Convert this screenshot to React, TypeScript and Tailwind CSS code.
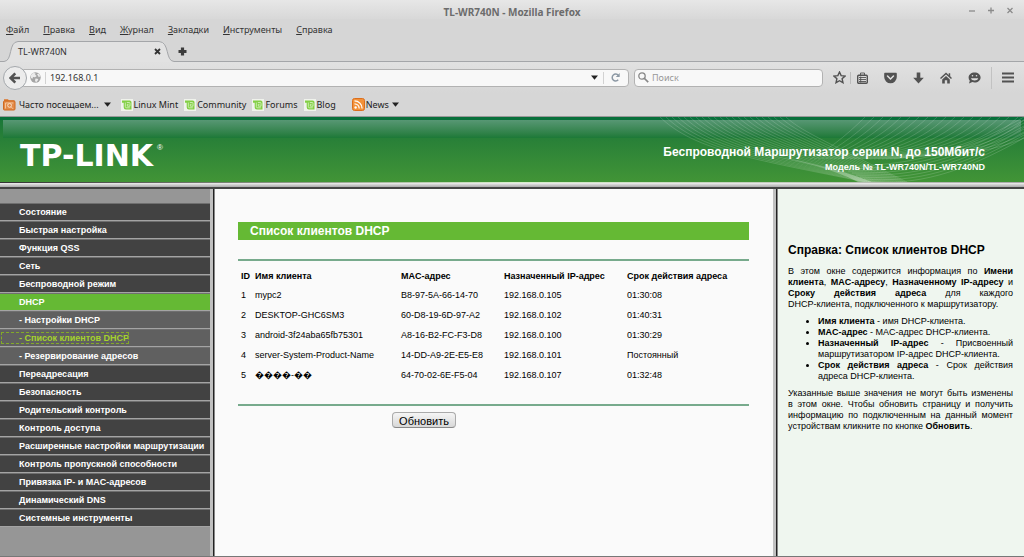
import type { ReactNode } from "react";

const ink = "#525252";

const menus = [
  ["Ф", "айл"],
  ["П", "равка"],
  ["В", "ид"],
  ["Ж", "урнал"],
  ["З", "акладки"],
  ["И", "нструменты"],
  ["С", "правка"],
];

type NavItem = { label: string; kind?: "open" | "sub" | "current" };

const nav: NavItem[] = [
  { label: "Состояние" },
  { label: "Быстрая настройка" },
  { label: "Функция QSS" },
  { label: "Сеть" },
  { label: "Беспроводной режим" },
  { label: "DHCP", kind: "open" },
  { label: "- Настройки DHCP", kind: "sub" },
  { label: "- Список клиентов DHCP", kind: "current" },
  { label: "- Резервирование адресов", kind: "sub" },
  { label: "Переадресация" },
  { label: "Безопасность" },
  { label: "Родительский контроль" },
  { label: "Контроль доступа" },
  { label: "Расширенные настройки маршрутизации" },
  { label: "Контроль пропускной способности" },
  { label: "Привязка IP- и MAC-адресов" },
  { label: "Динамический DNS" },
  { label: "Системные инструменты" },
];

const clients = [
  ["1", "mypc2", "B8-97-5A-66-14-70", "192.168.0.105", "01:30:08"],
  ["2", "DESKTOP-GHC6SM3", "60-D8-19-6D-97-A2", "192.168.0.102", "01:40:31"],
  ["3", "android-3f24aba65fb75301", "A8-16-B2-FC-F3-D8", "192.168.0.100", "01:30:29"],
  ["4", "server-System-Product-Name", "14-DD-A9-2E-E5-E8", "192.168.0.101", "Постоянный"],
  ["5", "\uFFFD\uFFFD\uFFFD\uFFFD-\uFFFD\uFFFD", "64-70-02-6E-F5-04", "192.168.0.107", "01:32:48"],
];

function Caret() {
  return (
    <svg width="7" height="5" viewBox="0 0 7 5" aria-hidden="true">
      <path d="M0 .5h7L3.5 4.8z" fill="#222" />
    </svg>
  );
}

function IconButton({ label, children }: { label: string; children: ReactNode }) {
  return (
    <button type="button" aria-label={label} className="flex h-5 w-4 shrink-0 items-center justify-center">
      {children}
    </button>
  );
}

function MintIcon() {
  return (
    <svg width="12" height="12" viewBox="0 0 12 12" aria-hidden="true">
      <rect width="12" height="12" fill="#f0f3ec" />
      <path d="M1 1.500h7.700a1.800 1.800 0 0 1 1.800 1.800V10.500H5a2.300 2.300 0 0 1-2.300-2.300V3.800H1z" fill="#83cf45" />
      <path d="M4.300 3.500v4a1.300 1.300 0 0 0 1.300 1.300h3.200M5.800 3.500h2.400a.8.8 0 0 1 .8.800v2.900H6.300V5.300h1.300" fill="none" stroke="#e6f9d8" strokeWidth=".7" />
    </svg>
  );
}

function FolderIcon() {
  return (
    <svg width="13" height="13" viewBox="0 0 13 13" aria-hidden="true">
      <path d="M1 3.500V1.300h4l.8 1h5.700v2z" fill="#dd762b" />
      <rect x=".5" y="3" width="11.500" height="9" rx="1" fill="#e38a48" stroke="#cf6a20" />
      <circle cx="6.600" cy="7.400" r="1.900" fill="none" stroke="#fbe8d4" strokeWidth=".9" />
      <path d="m8 8.800 2 2M2.500 10.500V5h7.800" stroke="#f7d3b0" strokeWidth=".8" fill="none" />
    </svg>
  );
}

function FeedIcon() {
  return (
    <svg width="13" height="13" viewBox="0 0 13 13" aria-hidden="true">
      <rect x=".5" y=".5" width="12" height="12" rx="2" fill="#f29139" stroke="#dc6e1d" />
      <circle cx="3.600" cy="9.500" r="1.200" fill="#fff" />
      <path d="M2.500 5.800a4.700 4.700 0 0 1 4.700 4.700M2.500 2.900a7.600 7.600 0 0 1 7.600 7.600" fill="none" stroke="#fff" strokeWidth="1.300" />
    </svg>
  );
}

function TitleBar() {
  return (
    <div className="grid h-[19px] grid-cols-[1fr_auto_1fr] items-center bg-linear-to-b from-[#e7e7e7] to-[#d8d8d8] pt-1">
      <span />
      <h1 className="text-[10px] leading-4 font-bold text-[#6c6c6c]">TL-WR740N - Mozilla Firefox</h1>
      <div className="flex justify-end gap-3 pr-[11px]">
        {["M0 4h6", "M0 3.500h6M3 .5v6", "M.5 1l5 5M5.500 1l-5 5"].map((d, i) => (
          <button key={d} type="button" aria-label={["Свернуть", "Развернуть", "Закрыть"][i]} className="flex h-4 w-[7px] items-start justify-center pt-[3px]">
            <svg width="6" height="7" viewBox="0 0 6 7"><path d={d} stroke="#8b8b8b" strokeWidth="1.300" /></svg>
          </button>
        ))}
      </div>
    </div>
  );
}

function TabStrip() {
  return (
    <div className="relative flex h-[21px] items-center">
      <svg className="absolute inset-0 h-[21px] w-full" aria-hidden="true">
        <path d="M0 20.500H4C13 20 8 1 18 .5H159C170 1 165 20 174 20.500H3000V22H0z" fill="#e2e2e2" stroke="#a4a6a9" />
      </svg>
      <div className="relative flex w-[165px] items-center justify-between pl-[18px] pr-1">
        <span>TL-WR740N</span>
        <button type="button" aria-label="Закрыть вкладку">
          <svg width="7" height="7" viewBox="0 0 7 7"><path d="m1 1 5 5M6 1 1 6" stroke="#333" strokeWidth="1.800" /></svg>
        </button>
      </div>
      <button type="button" aria-label="Новая вкладка" className="relative ml-[13px]">
        <svg width="9" height="9" viewBox="0 0 9 9"><path d="M4.500 .5v8M.5 4.500h8" stroke="#3c3c3c" strokeWidth="3.200" /></svg>
      </button>
    </div>
  );
}

function Toolbar() {
  return (
    <div className="flex h-[31px] items-center bg-linear-to-b from-[#e1e1e1] to-[#d6d6d6] pl-[3px] pr-2">
      <button type="button" aria-label="Назад" className="z-10 flex size-6 shrink-0 items-center justify-center rounded-full border border-[#a4a8ac] bg-[#ececec]">
        <svg width="12" height="12" viewBox="0 0 12 12"><path d="M11 6H2M6.300 1.300 1.600 6l4.700 4.700" fill="none" stroke={ink} strokeWidth="2.500" /></svg>
      </button>
      <div className="-ml-1 flex h-[18px] flex-1 items-center rounded-r-sm border border-[#b2b2b2] bg-[#f8f8f8] pl-[6px] pr-2">
        <svg width="11" height="11" viewBox="0 0 11 11" aria-hidden="true">
          <circle cx="5.500" cy="5.500" r="5.200" fill="#a5a5a5" />
          <path d="m1 3 2-2 2.500.3-.3 1.500L6.700 4 5 5.300 3 5l-.5 1.700L1 6zM7 2l2-.2 1.200 2.400-1.400 1zM5.500 6.500l2 .3.800 1L6 10.500l-1-2z" fill="#ececec" />
        </svg>
        <span className="ml-1 h-3 w-px bg-[#d2d2d2]" />
        <input aria-label="Адрес" defaultValue="192.168.0.1" className="ml-1 min-w-0 flex-1 bg-transparent outline-none" />
        <button type="button" aria-label="Показать историю" className="flex items-center"><Caret /></button>
        <span className="ml-[5px] h-3 w-px bg-[#d2d2d2]" />
        <button type="button" aria-label="Обновить страницу" className="ml-[7px]">
          <svg width="9" height="9" viewBox="0 0 9 9"><path d="M7.200 6.700A3.400 3.400 0 1 1 7.300 2.400" fill="none" stroke="#8c98a4" strokeWidth="1.500" /><path d="M8.700 0v4H4.800z" fill="#8c98a4" /></svg>
        </button>
      </div>
      <label className="ml-[5px] flex h-[18px] w-[189px] items-center gap-[3px] rounded-sm border border-[#b2b2b2] bg-[#f8f8f8] pl-[3px]">
        <svg width="11" height="11" viewBox="0 0 11 11" aria-hidden="true"><circle cx="4" cy="4" r="3.200" fill="none" stroke="#888" strokeWidth="1.300" /><path d="m6.500 6.500 3.700 3.700" stroke="#888" strokeWidth="1.700" /></svg>
        <input aria-label="Поиск" placeholder="Поиск" className="min-w-0 flex-1 bg-transparent outline-none placeholder:text-[#999]" />
      </label>
      <div className="ml-2 flex items-center">
        <IconButton label="Добавить в закладки">
          <svg width="13" height="13" viewBox="0 0 12 12"><path d="m6 1 1.500 3.300 3.600.4-2.700 2.400.8 3.700L6 9l-3.200 1.800.8-3.700L.9 4.700l3.600-.4z" fill="none" stroke={ink} strokeWidth="1.300" /></svg>
        </IconButton>
        <span className="ml-[3px] h-3 w-px bg-[#bbb]" />
        <span className="ml-[3px] flex gap-3 pr-px">
          <IconButton label="Закладки">
            <svg width="11" height="12" viewBox="0 0 11 12"><rect x=".7" y="3.200" width="9.600" height="8" rx="1" fill="none" stroke={ink} strokeWidth="1.400" /><path d="M3.500 3V1h4v2M2 5.500h7M2 7.500h7M2 9.500h7M3.700 4.500v6" fill="none" stroke={ink} strokeWidth=".9" /></svg>
          </IconButton>
          <IconButton label="Pocket">
            <svg width="13" height="12" viewBox="0 0 13 12"><path d="M1.200.7h10.600c.6 0 1 .4 1 1V5A6.300 6.300 0 0 1 .2 5V1.700c0-.6.400-1 1-1z" fill={ink} /><path d="m3.500 4 3 3 3-3" fill="none" stroke="#e2e2e2" strokeWidth="1.500" strokeLinecap="round" /></svg>
          </IconButton>
          <IconButton label="Загрузки">
            <svg width="11" height="12" viewBox="0 0 11 12"><path d="M3.700.5h3.600v5.300h3.500L5.500 11.500.2 5.800h3.500z" fill={ink} /></svg>
          </IconButton>
          <IconButton label="Домой">
            <svg width="12" height="12" viewBox="0 0 12 12"><path d="m.5 6.500 5.500-5 5.500 5" fill="none" stroke={ink} strokeWidth="1.500" /><path d="m2.200 7.500 3.800-3.500 3.800 3.500v4H7.200V8.300H4.800v3.200H2.200zM8.700 1.200h1.500v3.500L8.700 3.300z" fill={ink} /></svg>
          </IconButton>
          <IconButton label="Hello">
            <svg width="13" height="12" viewBox="0 0 13 12"><path d="M6.600.5C10 .5 12.600 2.600 12.600 5.500s-2.600 5-6 5a7 7 0 0 1-2.300-.4L1 11.500l.8-2.700A4.600 4.600 0 0 1 .6 5.500c0-2.900 2.600-5 6-5z" fill={ink} /><path d="M3 6.200h7.200c-.6 3-6.600 3-7.200 0z" fill="#ddd" /><circle cx="4.500" cy="3.800" r=".8" fill="#ddd" /><circle cx="8.500" cy="3.800" r=".8" fill="#ddd" /></svg>
          </IconButton>
        </span>
        <span className="mx-2 h-[22px] w-px bg-[#c2c2c2]" />
        <IconButton label="Меню">
          <svg width="12" height="11" viewBox="0 0 12 11"><path d="M0 1.500h12M0 5.500h12M0 9.500h12" stroke={ink} strokeWidth="2" /></svg>
        </IconButton>
      </div>
    </div>
  );
}

function Bookmarks() {
  return (
    <nav aria-label="Панель закладок" className="flex h-[23px] items-center pl-[3px] text-[#222]">
      <button type="button" className="flex items-center gap-[3px]"><FolderIcon /><span className="mr-0.5 whitespace-nowrap">Часто посещаем...</span><Caret /></button>
      <span className="ml-[10px] flex gap-[6px]">
        {["Linux Mint", "Community", "Forums", "Blog"].map((name) => (
          <a key={name} href="#" className="flex items-center gap-px whitespace-nowrap"><MintIcon />{name}</a>
        ))}
      </span>
      <button type="button" className="ml-4 flex items-center gap-px"><FeedIcon /><span className="mr-0.5">News</span><Caret /></button>
    </nav>
  );
}

function Waves() {
  const lines = Array.from({ length: 22 }, (_, i) => i);
  return (
    <svg className="absolute top-0 right-0 h-[65px] w-[364px]" viewBox="0 0 364 65" aria-hidden="true">
      <defs>
        <linearGradient id="swoosh" x1="0" x2="1">
          <stop offset="0" stopColor="#fff" stopOpacity="0" />
          <stop offset="1" stopColor="#fff" stopOpacity=".38" />
        </linearGradient>
      </defs>
      <path d="M85 35C125 40 165 47 212 65h-14C170 50 130 42 85 35z" fill="url(#swoosh)" />
      <g fill="none" stroke="#fff" strokeWidth=".8" strokeOpacity=".2">
        {lines.map((i) => (
          <path key={i} d={`M${i * 6} 0C${35 + i * 5} ${34 - i} ${95 + i * 3} ${42 - i} ${205 + i * 2} 65`} />
        ))}
        {lines.map((i) => (
          <path key={i} d={`M${205 + i * 9} 0C${185 + i * 8} ${20 + i} ${165 + i * 6} 35 ${150 + i * 4} 42`} />
        ))}
        {[0, 1, 2, 3, 4, 5, 6, 7].map((i) => (
          <path key={i} d={`M${208 - i * 4} ${64 - i * 2}C255 ${69 - i * 3} 300 ${57 - i * 3} 364 ${21 - i * 3}`} />
        ))}
      </g>
    </svg>
  );
}

function Banner() {
  return (
    <header className="relative bg-linear-to-b from-[#187638] to-[#429536]">
      <div className="h-[3px] bg-[#08703b]" />
      <div className="mx-[3px] h-[18px] bg-linear-to-b from-[#579774] to-[#1c7937]" />
      <Waves />
      <div className="relative flex h-11 justify-between pr-[39px] pl-5 text-white">
        <div className="flex items-start pt-1">
          <span className="font-['DejaVu_Sans',sans-serif] text-[30px] leading-7 font-bold">TP-LINK</span>
          <span className="pl-1 text-[8px] leading-3">®</span>
        </div>
        <div className="pt-[5px] text-right font-bold">
          <p className="text-[12px] leading-[18px]">Беспроводной Маршрутизатор серии N, до 150Мбит/с</p>
          <p className="text-[9px] leading-3">Модель № TL-WR740N/TL-WR740ND</p>
        </div>
      </div>
      <div className="h-px bg-linear-to-r from-[#333] via-[#d8efcb] to-[#aaa]" />
    </header>
  );
}

function Sidebar() {
  return (
    <nav aria-label="Разделы" className="w-[210px] shrink-0 bg-[#969696] pt-[14px] text-[9px] font-bold text-white">
      <ul>
        {nav.map(({ label, kind }) => (
          <li
            key={label}
            className={`flex h-[18px] items-center border-y border-t-[#6f6f6f] border-b-[#a4a4a4] ${
              kind === "open" ? "bg-[#65b934]" : kind ? "bg-[#606060]" : "bg-[#424242]"
            }`}
          >
            <a
              href="#"
              aria-current={kind === "current" ? "page" : undefined}
              className={
                kind === "current"
                  ? "ml-px pl-[18px] leading-3 whitespace-nowrap text-[#a5d22d] outline outline-dashed outline-[#83aa28] -outline-offset-1"
                  : "pl-[19px] leading-4 whitespace-nowrap"
              }
            >
              {label}
            </a>
          </li>
        ))}
      </ul>
    </nav>
  );
}

function FrameEdge() {
  return <div className="w-[5px] shrink-0 border-r border-r-[#888] bg-linear-to-r from-[#c0c0c0] from-75% to-[#222] to-75%" />;
}

function Clients() {
  return (
    <main className="min-w-0 flex-1 bg-[#fafafa] pt-[33px] pr-6 pl-[23px]">
      <h2 className="h-[18px] bg-[#65b934] pl-3 text-[12px] leading-[18px] font-bold text-white">Список клиентов DHCP</h2>
      <div className="mt-[19px] border-y-2 border-[#77aa8c] pt-[6px] pb-[18px]">
        <table className="w-full table-fixed text-left text-[9px]">
          <colgroup>
            <col className="w-[14px]" /><col className="w-[146px]" /><col className="w-[103px]" /><col className="w-[123px]" /><col />
          </colgroup>
          <thead>
            <tr className="h-[19px]">
              {["ID", "Имя клиента", "MAC-адрес", "Назначенный IP-адрес", "Срок действия адреса"].map((h) => (
                <th key={h} className="p-0 pl-[3px] whitespace-nowrap">{h}</th>
              ))}
            </tr>
          </thead>
          <tbody>
            {clients.map((row) => (
              <tr key={row[0]} className="h-5">
                {row.map((cell, i) => <td key={i} className="p-0 pl-[3px] whitespace-nowrap">{cell}</td>)}
              </tr>
            ))}
          </tbody>
        </table>
      </div>
      <div className="flex justify-center pt-[6px]">
        <button type="button" className="mr-[139px] h-4 w-16 rounded-sm border border-[#aaa] border-b-[#888] bg-linear-to-b from-[#f5f5f5] to-[#d8d8d8] text-[11px] leading-4">Обновить</button>
      </div>
    </main>
  );
}

function Help() {
  return (
    <aside className="w-[246px] shrink-0 bg-[#eff6ef] pt-[52px] pr-[11px] pl-[10px] text-justify text-[9px] leading-[11px]">
      <h2 className="text-left text-[12px] leading-[18px] font-bold whitespace-nowrap">Справка: Список клиентов DHCP</h2>
      <p className="mt-[7px]">
        В этом окне содержится информация по <b>Имени клиента</b>, <b>MAC-адресу</b>, <b>Назначенному IP-адресу</b> и <b>Сроку действия адреса</b> для каждого <span className="whitespace-nowrap">DHCP-клиента</span>, подключенного к маршрутизатору.
      </p>
      <ul className="my-[6px] list-disc pl-[30px]">
        <li><b>Имя клиента</b> - имя DHCP-клиента.</li>
        <li><b>MAC-адрес</b> - MAC-адрес DHCP-клиента.</li>
        <li><b>Назначенный IP-адрес</b> - Присвоенный маршрутизатором IP-адрес DHCP-клиента.</li>
        <li><b>Срок действия адреса</b> - Срок действия адреса DHCP-клиента.</li>
      </ul>
      <p>
        Указанные выше значения не могут быть изменены в{"\u00a0"}этом окне. Чтобы обновить страницу и получить информацию по подключенным на данный момент устройствам кликните по кнопке <b>Обновить</b>.
      </p>
    </aside>
  );
}

export default function App() {
  return (
    <div className="flex min-h-screen flex-col bg-[#d6d6d6] font-['Liberation_Sans',sans-serif] text-black">
      <div className="border-b border-[#999] font-['Noto_Sans',sans-serif] text-[9px] leading-4 text-[#333]">
        <TitleBar />
        <nav aria-label="Меню" className="flex h-[22px] items-center gap-[14px] pl-[6px]">
          {menus.map(([key, rest]) => (
            <button key={rest} type="button"><u>{key}</u>{rest}</button>
          ))}
        </nav>
        <TabStrip />
        <Toolbar />
        <Bookmarks />
      </div>
      <Banner />
      <div className="h-[6px] border-b-2 border-[#444] bg-linear-to-b from-[#eee] to-[#aaa]" />
      <div className="flex flex-1 border-b border-[#777]">
        <Sidebar />
        <FrameEdge />
        <Clients />
        <FrameEdge />
        <Help />
      </div>
    </div>
  );
}
